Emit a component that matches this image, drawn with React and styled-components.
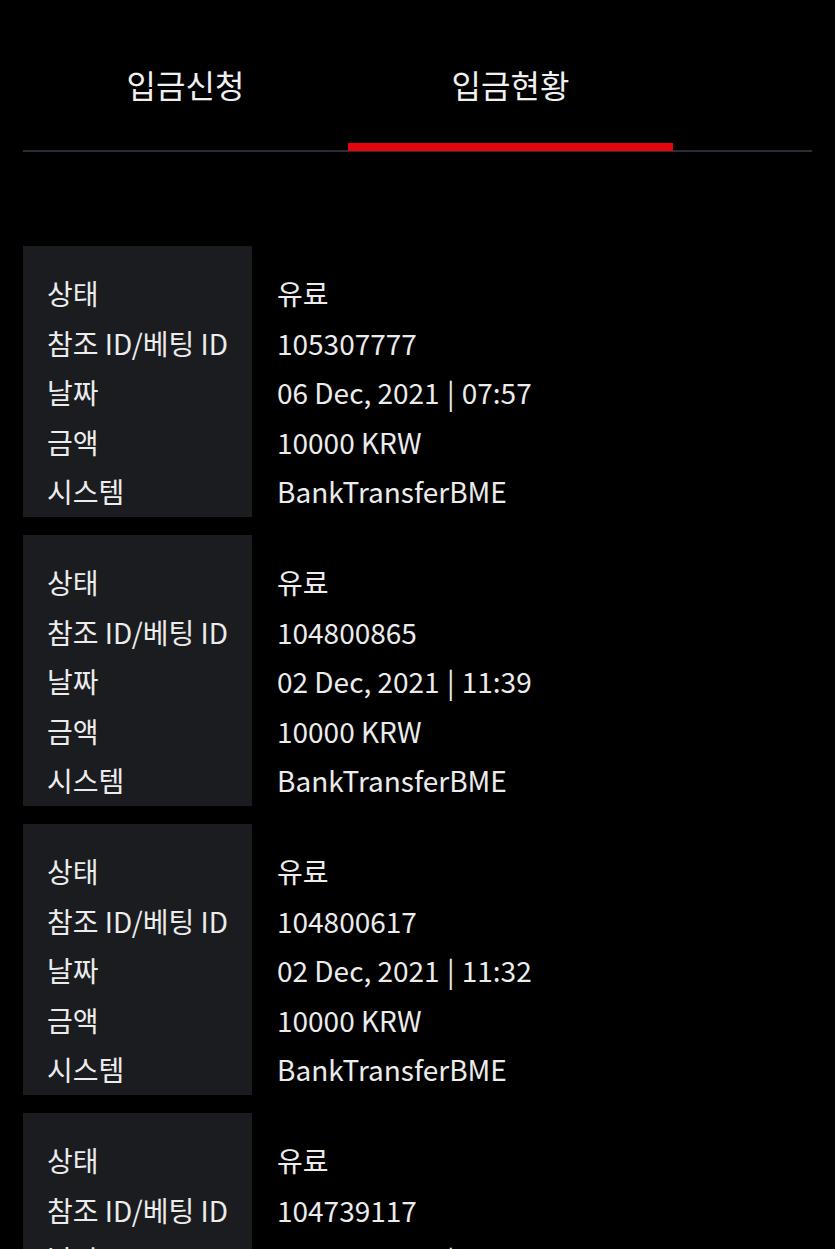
import React from "react";
import styled, { createGlobalStyle } from "styled-components";

const Global = createGlobalStyle`
  html, body { margin: 0; padding: 0; background: #000; }
  body { font-family: "Noto Sans CJK KR", "Noto Sans", sans-serif; color: #ececec; }
`;

const Page = styled.div`
  padding: 0 23px 40px 23px;
`;

const TabBar = styled.div`
  display: flex;
  border-bottom: 2px solid #2a2c36;
  height: 152px;
  box-sizing: border-box;
`;

const Tab = styled.div`
  width: 325px;
  position: relative;
  display: flex;
  align-items: center;
  justify-content: center;
  padding-top: 17px;
  box-sizing: border-box;
  font-size: 32px;
  line-height: 1;
  color: #f0f0f0;
  &::after {
    content: "";
    display: ${(p) => (p.$active ? "block" : "none")};
    position: absolute;
    left: 0;
    right: 0;
    bottom: -1px;
    height: 8px;
    background: #e5040b;
  }
`;

const List = styled.div`
  margin-top: 94px;
  display: flex;
  flex-direction: column;
  gap: 18.5px;
`;

const Card = styled.div`
  display: flex;
  font-size: 28px;
  line-height: 49.5px;
`;

const LabelCol = styled.div`
  width: 229px;
  flex: none;
  background: #1b1c20;
  padding: 23px 0 0 24px;
  box-sizing: border-box;
  color: #ececec;
`;

const ValueCol = styled.div`
  padding: 23px 0 0 25px;
  color: #ececec;
`;

const Line = styled.div`
  white-space: nowrap;
`;

const Sep = styled.span`
  margin: 0 1px;
`;

const rows = [
  { id: "105307777", date: "06 Dec, 2021", time: "07:57" },
  { id: "104800865", date: "02 Dec, 2021", time: "11:39" },
  { id: "104800617", date: "02 Dec, 2021", time: "11:32" },
  { id: "104739117", date: "01 Dec, 2021", time: "18:20" },
];

const labels = ["상태", "참조 ID/베팅 ID", "날짜", "금액", "시스템"];

export default function App() {
  return (
    <>
      <Global />
      <Page>
        <TabBar>
          <Tab>입금신청</Tab>
          <Tab $active>입금현황</Tab>
        </TabBar>
        <List>
          {rows.map((r) => (
            <Card key={r.id}>
              <LabelCol>
                {labels.map((l) => (
                  <Line key={l}>{l}</Line>
                ))}
              </LabelCol>
              <ValueCol>
                <Line>유료</Line>
                <Line>{r.id}</Line>
                <Line>
                  {r.date} <Sep>|</Sep> {r.time}
                </Line>
                <Line>10000 KRW</Line>
                <Line>BankTransferBME</Line>
              </ValueCol>
            </Card>
          ))}
        </List>
      </Page>
    </>
  );
}
